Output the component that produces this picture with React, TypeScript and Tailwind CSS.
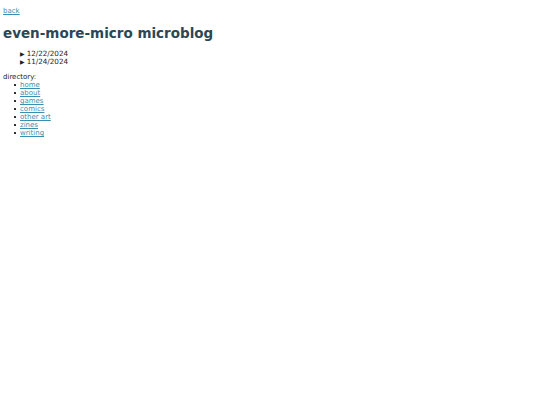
export default function App() {
  const links = ["home", "about", "games", "comics", "other art", "zines", "writing"];
  return (
    <div className="min-h-[405px] bg-white px-[3px] text-[7px] leading-[8px] text-[#222]" style={{ fontFamily: '"DejaVu Sans", Verdana, sans-serif' }}>
      <div className="pt-[7px]">
        <a href="#" className="text-[#3a8fb0] underline">back</a>
      </div>
      <h1 className="mt-[10px] text-[13.5px] leading-[16px] font-bold text-[#2b4756]">even-more-micro microblog</h1>
      <div className="mt-[9px] pl-[17px]">
        <div className="flex items-center gap-[2px]"><span className="text-[6px]">▶</span><span className="text-[7.2px]">12/22/2024</span></div>
        <div className="flex items-center gap-[2px]"><span className="text-[6px]">▶</span><span className="text-[7.2px]">11/24/2024</span></div>
      </div>
      <div className="mt-[7px]">directory:</div>
      <ul className="pl-[11px]">
        {links.map((l) => (
          <li key={l} className="flex items-center gap-[4px]">
            <span className="inline-block h-[2px] w-[2px] bg-[#333]" />
            <a href="#" className="text-[#3a8fb0] underline">{l}</a>
          </li>
        ))}
      </ul>
    </div>
  );
}
